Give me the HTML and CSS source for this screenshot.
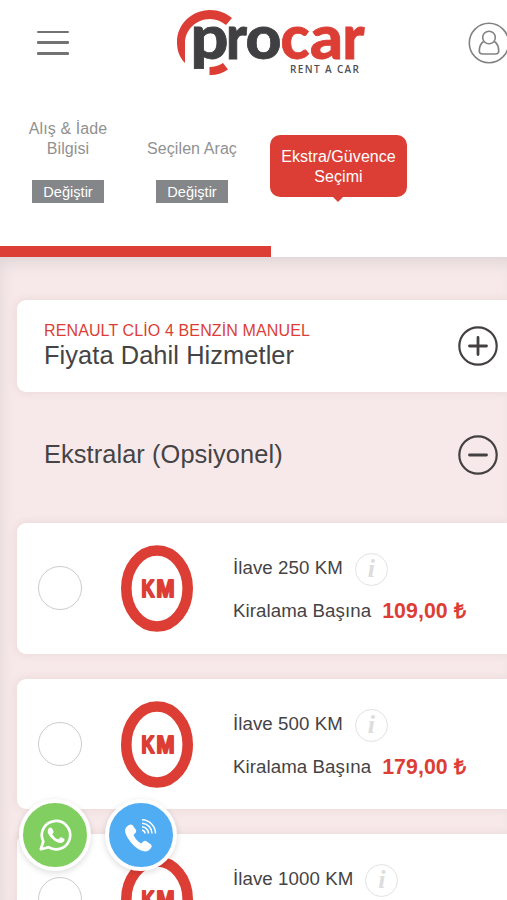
FILE: index.html
```html
<!DOCTYPE html>
<html lang="tr">
<head>
<meta charset="utf-8">
<meta name="viewport" content="width=device-width, initial-scale=1">
<title>Procar Rent A Car</title>
<link rel="stylesheet" href="styles.css">
</head>
<body>
<header class="header">
  <div class="menu"><span></span><span></span><span></span></div>
  <svg class="logo" width="200" height="80" viewBox="170 0 200 80">
    <path d="M185 63C179 57 177 50 177 42C177 24 192 10 210 10C219 10 226 13 232 18L226 25C221 21 216 19 210 19C196 19 185 30 185 43Z" fill="#dc3e35"/>
    <path d="M209.500 67Q217 67 223 63L228 69.500Q219 75.500 209.500 75Z" fill="#dc3e35"/>
    <g class="logo-word">
      <text class="dark" x="190.500" y="58.500" textLength="38" lengthAdjust="spacingAndGlyphs">p</text>
      <text class="dark" x="226" y="58.500" textLength="21" lengthAdjust="spacingAndGlyphs">r</text>
      <text class="dark" x="245.500" y="58.500" textLength="36" lengthAdjust="spacingAndGlyphs">o</text>
      <text class="red" x="280.500" y="58.500" textLength="29" lengthAdjust="spacingAndGlyphs">c</text>
      <text class="red" x="310" y="58.500" textLength="33" lengthAdjust="spacingAndGlyphs">a</text>
      <text class="red" x="342.500" y="58.500" textLength="22" lengthAdjust="spacingAndGlyphs">r</text>
    </g>
    <text class="logo-sub" x="290" y="72.500" textLength="69">RENT A CAR</text>
  </svg>
  <svg class="user" width="42" height="42" viewBox="0 0 42 42">
    <circle cx="21" cy="21" r="19.700"/>
    <circle cx="21" cy="15.500" r="6.300"/>
    <path d="M15.600 19.500C12 22 11.300 25 11.300 29Q11.300 32 14.500 32H27.500Q30.700 32 30.700 29C30.700 25 30 22 26.400 19.500"/>
  </svg>
</header>
<nav class="steps">
  <div class="step step-first"><div class="step-name">Alış &amp; İade<br>Bilgisi</div><span class="change">Değiştir</span></div>
  <div class="step step-car"><div class="step-name">Seçilen Araç</div><span class="change">Değiştir</span></div>
  <div class="step-active">Ekstra/Güvence<br>Seçimi</div>
</nav>
<div class="progress"><div class="progress-fill"></div></div>
<main class="content">
  <section class="panel">
    <div><div class="car-name">RENAULT CLİO 4 BENZİN MANUEL</div><h2>Fiyata Dahil Hizmetler</h2></div>
    <svg class="toggle" width="40" height="40" viewBox="0 0 40 40"><circle cx="20" cy="20" r="18.700"/><path d="M11.500 20H28.500M20 11.500V28.500"/></svg>
  </section>
  <section class="extras-head">
    <h2>Ekstralar (Opsiyonel)</h2>
    <svg class="toggle" width="40" height="40" viewBox="0 0 40 40"><circle cx="20" cy="20" r="18.700"/><path d="M11.500 20H28.500"/></svg>
  </section>
  <section class="options">
    <article class="option">
      <span class="radio"></span>
      <svg class="km" width="72" height="88" viewBox="0 0 72 88"><ellipse cx="36" cy="43.500" rx="30.700" ry="38"/><text x="20.500" y="51.500" textLength="13" lengthAdjust="spacingAndGlyphs">K</text><text x="35.500" y="51.500" textLength="18" lengthAdjust="spacingAndGlyphs">M</text></svg>
      <div class="details"><div class="line">İlave 250 KM <i class="info">i</i></div><div class="line price-line">Kiralama Başına <b>109,00 ₺</b></div></div>
    </article>
    <article class="option">
      <span class="radio"></span>
      <svg class="km" width="72" height="88" viewBox="0 0 72 88"><ellipse cx="36" cy="43.500" rx="30.700" ry="38"/><text x="20.500" y="51.500" textLength="13" lengthAdjust="spacingAndGlyphs">K</text><text x="35.500" y="51.500" textLength="18" lengthAdjust="spacingAndGlyphs">M</text></svg>
      <div class="details"><div class="line">İlave 500 KM <i class="info">i</i></div><div class="line price-line">Kiralama Başına <b>179,00 ₺</b></div></div>
    </article>
    <article class="option">
      <span class="radio"></span>
      <svg class="km" width="72" height="88" viewBox="0 0 72 88"><ellipse cx="36" cy="43.500" rx="30.700" ry="38"/><text x="20.500" y="51.500" textLength="13" lengthAdjust="spacingAndGlyphs">K</text><text x="35.500" y="51.500" textLength="18" lengthAdjust="spacingAndGlyphs">M</text></svg>
      <div class="details"><div class="line">İlave 1000 KM <i class="info">i</i></div></div>
    </article>
  </section>
</main>
<div class="contacts">
  <div class="contact whatsapp">
    <svg width="64" height="64" viewBox="0 0 64 64">
      <path d="M17.800 46.200L20.300 38.500A14.200 14.200 0 1 1 25.500 44.200Z" fill="none" stroke="#fff" stroke-width="2.700" stroke-linejoin="round"/>
      <path d="M26 25Q28 23.500 29.500 26L30.600 28.500Q31 29.500 29.200 31.300Q31.500 35.300 35.300 36.500L37.300 34.500Q38 34 39 34.500L41.500 36Q42 38.500 39.500 39.600Q36.500 41 31.500 37.700Q26.500 34 24.800 30Q24 27 26 25Z" fill="#fff"/>
    </svg>
  </div>
  <div class="contact phone">
    <svg width="64" height="64" viewBox="0 0 64 64">
      <path d="M18.500 23Q21 20.500 23.500 22L27 27Q28 29 24.500 32Q27.500 38.500 32.500 40.500Q34.500 37 37 38L42 41.500Q43.500 43 42 45Q39.500 48.500 36 48.500Q28 47 22 39.500Q16 32 16 27Q16.500 24.500 18.500 23Z" fill="#fff"/>
      <g fill="none" stroke="#fff" stroke-width="1.500"><path d="M33 16.800A13.800 13.800 0 0 1 46.500 30.500"/><path d="M33 20.300A10.300 10.300 0 0 1 43 30.500"/><path d="M33 23.800A6.800 6.800 0 0 1 39.500 30.500"/><path d="M33 27.300A3.300 3.300 0 0 1 36 30.500"/></g>
    </svg>
  </div>
</div>
</body>
</html>
```
FILE: styles.css
```css
* { box-sizing: border-box; }
body { margin: 0; width: 507px; height: 900px; overflow: hidden; position: relative; background: #fff; font-family: "Liberation Sans", Arial, sans-serif; color: #444345; }
h2 { margin: 0; font-size: 25.400px; line-height: 29px; font-weight: 400; letter-spacing: .08px; }

.header { display: flex; height: 110px; align-items: flex-start; overflow: hidden; }
.menu { flex: none; width: 32px; margin: 30.500px 101px 0 37px; display: flex; flex-direction: column; gap: 8px; }
.menu span { height: 2.800px; background: #737373; border-radius: 1px; }
.logo { flex: none; }
.logo-word { font-family: Lato, sans-serif; font-weight: 900; font-size: 61px; stroke-width: .800px; }
.dark { fill: #404042; stroke: #404042; }
.red { fill: #dc3e35; stroke: #dc3e35; }
.logo-sub { font-family: "Open Sans", sans-serif; font-weight: 600; font-size: 10px; fill: #505052; }
.user { flex: none; margin: 22px 0 0 97.500px; fill: none; stroke: #828282; stroke-width: 1.600; }

.steps { display: flex; height: 136px; align-items: flex-start; font-size: 16px; line-height: 20px; text-align: center; }
.step { display: flex; flex-direction: column; align-items: center; color: #919191; margin-top: 9px; }
.step-first { width: 136px; }
.step-car { width: 112px; }
.step-name { height: 61px; display: flex; align-items: flex-start; white-space: nowrap; letter-spacing: .08px; }
.step-car .step-name { padding-top: 20px; }
.change { width: 72px; height: 23px; line-height: 24px; background: #848689; color: #fff; font-size: 14.600px; }
.step-active { position: relative; margin: 25px 0 0 22px; width: 137px; height: 62px; padding-top: 12px; border-radius: 10px; background: #dc3e35; color: #fff; letter-spacing: .06px; }
.step-active::after { content: ""; position: absolute; left: 62px; top: 61px; border: 6px solid transparent; border-top-color: #dc3e35; border-bottom: 0; }
.progress { height: 11px; }
.progress-fill { width: 271px; height: 11px; background: #dc3e35; }

.content { height: 643px; padding: 43px 0 0 17px; background: #f7e9e9; box-shadow: inset 0 14px 14px -8px #e0d5d7, inset 12px 0 14px -9px #e9dcdd; overflow: hidden; }
.panel, .option { background: #fff; border-radius: 9px 0 0 9px; box-shadow: 0 0 10px rgba(95, 50, 60, .1); }
.panel { height: 91.500px; padding: 0 9px 0 27px; display: flex; justify-content: space-between; }
.panel > div { padding-top: 21px; }
.car-name { color: #dc3e35; font-size: 16px; line-height: 20px; letter-spacing: .12px; }
.panel .toggle { margin-top: 26px; }
.toggle { flex: none; fill: none; stroke: #444041; stroke-width: 2.200; }
.toggle path { stroke-width: 2.800; stroke-linecap: round; }
.extras-head { height: 131.500px; padding: 0 9px 5px 27px; display: flex; justify-content: space-between; align-items: center; }
.options { display: flex; flex-direction: column; gap: 25px; }
.option { height: 130.500px; flex: none; display: flex; align-items: flex-start; }
.radio { width: 44px; height: 44px; margin: 43px 0 0 21px; border: 1.500px solid #ccc; border-radius: 50%; }
.km { margin: 22px 0 0 39px; }
.km ellipse { fill: #fff; stroke: #dc3e35; stroke-width: 10.600px; }
.km text { font-family: "Liberation Sans", sans-serif; font-size: 23px; font-weight: 700; fill: #dc3e35; stroke: #dc3e35; stroke-width: 2px; stroke-linejoin: round; }
.details { margin: 28px 0 0 40px; font-size: 18.700px; letter-spacing: .07px; }
.line { height: 36px; display: flex; line-height: 34px; white-space: nowrap; }
.price-line { margin-top: 7px; }
.price-line b { color: #dc3e35; font-size: 21.300px; margin-left: 11px; }
.info { width: 33px; height: 33px; margin: 2px 0 0 12px; border: 1.500px solid #e2e2e2; border-radius: 50%; color: #ddd; font: italic 700 26px/29px "Liberation Serif", serif; text-align: center; }

.contacts { position: absolute; left: 19px; top: 799px; display: flex; gap: 14px; }
.contact { width: 72px; height: 72px; border: 4px solid #fff; border-radius: 50%; box-shadow: 0 2px 6px rgba(0, 0, 0, .14); }
.contact svg { display: block; }
.whatsapp { background: #80cf60; }
.phone { background: #51adf3; }
```
